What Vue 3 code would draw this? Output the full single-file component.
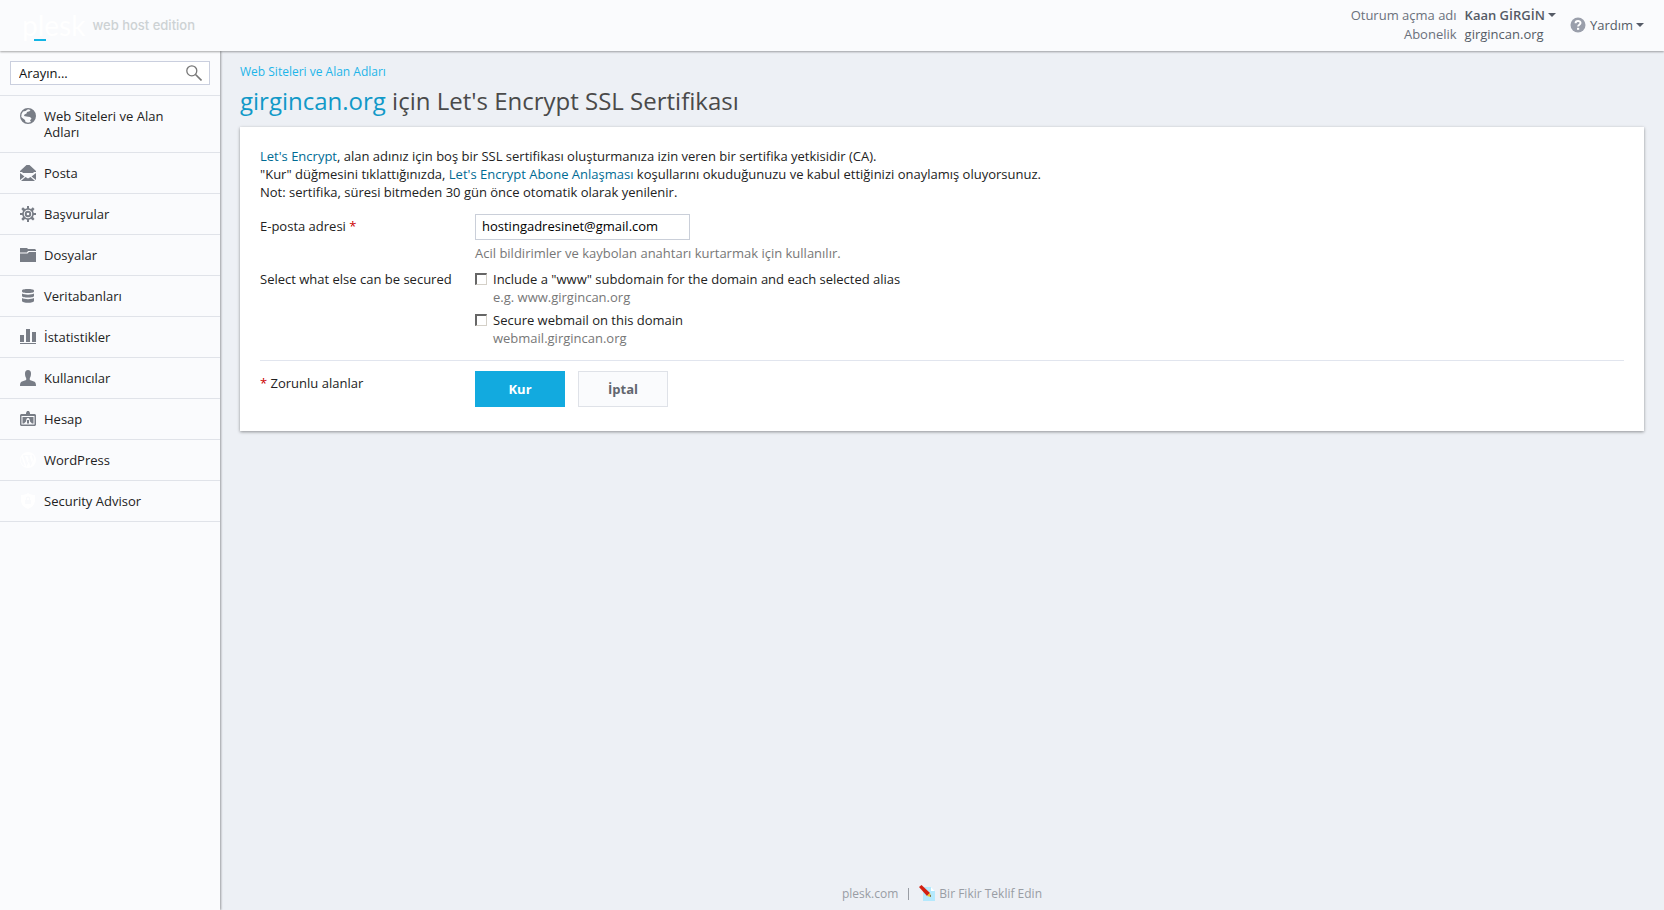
<template>
  <div class="page">
    <header class="header">
      <a class="logo" href="#">
        <span class="logo__name">plesk</span>
        <span class="logo__edition">web host edition</span>
      </a>
      <div class="account">
        <div class="account__grid">
          <span class="account__label">Oturum açma adı</span>
          <button class="account__button account__button--bold" type="button">
            Kaan GİRGİN<span class="caret"></span>
          </button>
          <span class="account__label">Abonelik</span>
          <span>girgincan.org</span>
        </div>
        <button class="account__button" type="button">
          <svg class="account__help" viewBox="0 0 16 16" aria-hidden="true">
            <circle cx="8" cy="8" r="7.5" fill="#9a9fab" />
            <path d="M5.6 6.2C5.6 3.2 10.5 3.2 10.5 6.1C10.5 7.8 8.1 7.8 8.1 9.6" fill="none" stroke="#fff" stroke-width="2" />
            <rect x="7" y="10.8" width="2.2" height="2" fill="#fff" />
          </svg>
          Yardım<span class="caret"></span>
        </button>
      </div>
    </header>

    <div class="body">
      <aside class="sidebar">
        <form class="search" @submit.prevent>
          <input v-model="search" class="search__input" type="text" placeholder="Arayın..." aria-label="Arayın" />
          <button class="search__button" type="submit" aria-label="Ara">
            <svg viewBox="0 0 16 16" fill="none" stroke="#777">
              <circle cx="5.8" cy="5.8" r="5" stroke-width="1.3" />
              <path d="M9.5 9.5L15.5 15.5" stroke-width="1.6" />
            </svg>
          </button>
        </form>
        <nav>
          <ul class="menu">
            <li v-for="item in menu" :key="item.label" class="menu__item">
              <a class="menu__link" href="#">
                <svg class="menu__icon" :class="{ 'menu__icon--pale': item.pale }" viewBox="0 0 16 16" aria-hidden="true">
                  <path :d="item.icon" fill="currentColor" fill-rule="evenodd" />
                </svg>
                <span>{{ item.label }}</span>
              </a>
            </li>
          </ul>
        </nav>
      </aside>

      <div class="content">
        <main class="main">
          <a class="breadcrumb" href="#">Web Siteleri ve Alan Adları</a>
          <h1 class="title"><a href="#">girgincan.org</a> için Let's Encrypt SSL Sertifikası</h1>

          <form class="panel" @submit.prevent>
            <p class="panel__intro">
              <a href="#">Let's Encrypt</a>, alan adınız için boş bir SSL sertifikası oluşturmanıza izin veren bir sertifika yetkisidir (CA).<br />
              "Kur" düğmesini tıklattığınızda, <a href="#">Let's Encrypt Abone Anlaşması</a> koşullarını okuduğunuzu ve kabul ettiğinizi onaylamış oluyorsunuz.<br />
              Not: sertifika, süresi bitmeden 30 gün önce otomatik olarak yenilenir.
            </p>

            <div class="row">
              <label class="row__label row__label--input" for="email">E-posta adresi <span class="required">*</span></label>
              <div>
                <input id="email" v-model="email" class="text-input" type="text" />
                <div class="hint hint--input">Acil bildirimler ve kaybolan anahtarı kurtarmak için kullanılır.</div>
              </div>
            </div>

            <div class="row row--options">
              <div id="secure-label" class="row__label">Select what else can be secured</div>
              <div class="options" role="group" aria-labelledby="secure-label">
                <div v-for="option in options" :key="option.id" class="option">
                  <input :id="option.id" v-model="option.checked" class="option__box" type="checkbox" />
                  <div>
                    <label :for="option.id">{{ option.label }}</label>
                    <div class="hint">{{ option.hint }}</div>
                  </div>
                </div>
              </div>
            </div>

            <div class="row row--footer">
              <div class="row__label row__label--footer"><span class="required">*</span> Zorunlu alanlar</div>
              <div class="buttons">
                <button class="button button--primary" type="submit">Kur</button>
                <button class="button" type="button">İptal</button>
              </div>
            </div>
          </form>
        </main>

        <footer class="footer">
          <a href="#">plesk.com</a>
          <span class="footer__separator"></span>
          <a class="footer__idea" href="#">
            <svg viewBox="0 0 16 16" aria-hidden="true">
              <path d="M4 2H12L16 6V16H4Z" fill="#b4e9fd" />
              <path d="M12 2V6H16Z" fill="#fff" />
              <path d="M0 2L2.5 0L11 8L8 11Z" fill="#d42010" />
              <path d="M8 11L11 8L12 12Z" fill="#f5c020" />
              <path d="M11 11L11.8 9.8L12 12Z" fill="#333" />
            </svg>
            Bir Fikir Teklif Edin
          </a>
        </footer>
      </div>
    </div>
  </div>
</template>

<script setup>
import { ref } from 'vue'

const search = ref('')
const email = ref('hostingadresinet@gmail.com')

const options = ref([
  {
    id: 'include-www',
    label: 'Include a "www" subdomain for the domain and each selected alias',
    hint: 'e.g. www.girgincan.org',
    checked: false,
  },
  {
    id: 'secure-webmail',
    label: 'Secure webmail on this domain',
    hint: 'webmail.girgincan.org',
    checked: false,
  },
])

// icon paths are drawn on a 16x16 grid
const menu = [
  {
    label: 'Web Siteleri ve Alan Adları',
    icon: 'M8 0A8 8 0 1 0 8 16A8 8 0 1 0 8 0ZM8 1.3L10.5 2L9.5 3.2L7 4L6.5 5.5L4.5 6.5L4 8L6.5 8.5L10 9L11.5 10.5L10 12.5L11 14L8 14.8L5.5 14L5 12L3 10.5L1.3 9A7 7 0 0 1 3 3.5L5.5 3Z',
  },
  {
    label: 'Posta',
    icon: 'M0 6L6.5 0H9.5L16 6V7H0ZM0 8L4.5 11.5L0 15ZM16 8L11.5 11.5L16 15ZM1 16L5.5 12L8 13.5L10.5 12L15 16ZM2 7L3 8H13L14 7Z',
  },
  {
    label: 'Başvurular',
    icon: 'M7 0H9V2.2L11 3L12.8 1.3L14.5 3L13 5L13.8 7H16V9H13.8L13 11L14.5 13L13 14.5L11 13L9 13.8V16H7V13.8L5 13L3 14.7L1.3 13L3 11L2.2 9H0V7H2.2L3 5L1.3 3L3 1.3L5 3L7 2.2ZM8 3.8A4.2 4.2 0 1 0 8 12.2A4.2 4.2 0 1 0 8 3.8ZM8 4.8A3.2 3.2 0 1 1 8 11.2A3.2 3.2 0 1 1 8 4.8ZM8 6.7A1.3 1.3 0 1 0 8 9.3A1.3 1.3 0 1 0 8 6.7Z',
  },
  {
    label: 'Dosyalar',
    icon: 'M0 1H7L8 2H15L16 3V4H8L7 5.5H0ZM0 6.5H7.5L9 5H16V15H0Z',
  },
  {
    label: 'Veritabanları',
    icon: 'M2 2.5C2 .5 14 .5 14 2.5V3.5C14 5.5 2 5.5 2 3.5ZM2 5.5C4 7 12 7 14 5.5V8C14 10 2 10 2 8ZM2 10C4 11.5 12 11.5 14 10V12.8C14 15.5 2 15.5 2 12.8Z',
  },
  {
    label: 'İstatistikler',
    icon: 'M0 6H4V13H0ZM6 0H10V13H6ZM12 3H16V13H12ZM0 14H16V15H0Z',
  },
  {
    label: 'Kullanıcılar',
    icon: 'M8 0C10 0 11 1.5 11 3.5C11 6 10.5 7 9.8 8V10L14 11.5C15.5 12 16 13.5 16 16H0C0 13.5 .5 12 2 11.5L6.2 10V8C5.5 7 5 6 5 3.5C5 1.5 6 0 8 0Z',
  },
  {
    label: 'Hesap',
    icon: 'M6 2L7 0H9L10 2V3H15L16 4V14L15 15H1L0 14V4L1 3H6ZM1.5 5V13.5H14.5V5ZM2.5 6H13.5V12.5H12L10 10.5L9.5 8L8.5 7H7.5L6.5 8L6 10.5L4 12.5H2.5ZM7 9H9V12.5H7Z',
  },
  {
    label: 'WordPress',
    icon: 'M8 0A8 8 0 1 0 8 16A8 8 0 1 0 8 0ZM1.5 5L5 14.5A7 7 0 0 1 1.5 5ZM3 3H6V4H5L7.5 11L8.7 7.7L7.3 4H6V3H10.5V4H9.5L12 11L13 7.5L11.5 3.5L13 3L14 5V7L10.5 14.5L8.7 9.5L6.5 15L3 4Z',
    pale: true,
  },
  {
    label: 'Security Advisor',
    icon: 'M8 0C10 1.5 12.5 2 15 2V7C15 11.5 12 14.5 8 16C4 14.5 1 11.5 1 7V2C3.5 2 6 1.5 8 0ZM8 3.5C6 3.5 5.8 5 5.8 7H5V11H11V7H10.2C10.2 5 10 3.5 8 3.5ZM8 4.5C9 4.5 9.2 5.5 9.2 7H6.8C6.8 5.5 7 4.5 8 4.5Z',
    pale: true,
  },
]
</script>

<style>
body {
  margin: 0;
  background: #edf0f5;
}
</style>

<style scoped>
.page {
  display: flex;
  flex-direction: column;
  min-height: 100vh;
  font-family: "Open Sans", "Noto Sans", sans-serif;
  font-size: 13px;
  line-height: 18px;
  color: #222;
}

.page *,
.page {
  box-sizing: border-box;
}

a {
  text-decoration: none;
}

button,
input {
  font: inherit;
}

/* Header */
.header {
  position: relative;
  z-index: 1;
  display: flex;
  justify-content: space-between;
  height: 51px;
  padding: 0 20px 2px 22px;
  background: #fafbfd;
  box-shadow: 0 1px 2px rgba(0, 0, 0, 0.35);
}

.logo {
  display: flex;
  align-items: center;
  gap: 7px;
}

.logo__name {
  position: relative;
  font-family: Lato, sans-serif;
  font-size: 28px;
  line-height: 28px;
  color: #fff;
}

.logo__name::after {
  content: "";
  position: absolute;
  left: 12px;
  bottom: -2px;
  width: 12px;
  height: 2px;
  background: #12b5e5;
}

.logo__edition {
  font-family: Inter, sans-serif;
  font-weight: 500;
  color: #cdd2d4;
}

.account {
  display: flex;
  align-items: center;
  gap: 14px;
  color: #555b66;
}

.account__grid {
  display: grid;
  grid-template-columns: auto auto;
  column-gap: 8px;
  row-gap: 1px;
}

.account__label {
  text-align: right;
  color: #6b717c;
}

.account__button {
  display: flex;
  align-items: center;
  padding: 0;
  border: 0;
  background: none;
  color: #555b66;
  cursor: pointer;
}

.account__button--bold {
  font-weight: 600;
}

.account__help {
  width: 16px;
  height: 16px;
  margin-right: 4px;
}

.caret {
  margin-left: 3px;
  border: 4px solid transparent;
  border-top-color: currentColor;
  border-bottom: 0;
}

/* Sidebar */
.body {
  display: flex;
  flex: 1;
}

.sidebar {
  width: 220px;
  flex: none;
  background: #fafbfd;
  box-shadow: 1px 0 2px rgba(0, 0, 0, 0.35);
}

.search {
  display: flex;
  height: 24px;
  margin: 10px 10px 10px;
  border: 1px solid #cacfde;
  background: #fff;
}

.search__input {
  flex: 1;
  min-width: 0;
  padding: 0 8px;
  border: 0;
  outline: 0;
  background: none;
}

.search__input::placeholder {
  color: #111;
  opacity: 1;
}

.search__button {
  display: flex;
  align-items: center;
  padding: 0 7px;
  border: 0;
  background: none;
  cursor: pointer;
}

.search__button svg {
  width: 16px;
  height: 16px;
}

.menu {
  margin: 0;
  padding: 0;
  list-style: none;
  border-top: 1px solid #e0e3e9;
}

.menu__item {
  border-bottom: 1px solid #e0e3e9;
}

.menu__link {
  display: flex;
  gap: 8px;
  padding: 12px 20px;
  line-height: 16px;
  color: #222;
}

.menu__icon {
  flex: none;
  width: 16px;
  height: 16px;
  color: #787d86;
}

.menu__icon--pale {
  color: #fff;
}

/* Content */
.content {
  display: flex;
  flex: 1;
  flex-direction: column;
  justify-content: space-between;
  padding: 12px 20px 7px;
}

.breadcrumb {
  display: block;
  font-size: 12px;
  color: #1eb5e9;
}

.title {
  margin: 4px 0 10px;
  font-size: 24px;
  font-weight: 400;
  line-height: 32px;
  color: #4a4a4a;
}

.title a {
  color: #1199c8;
}

.panel {
  padding: 20px 20px 24px;
  background: #fff;
  box-shadow: 0 1px 3px rgba(0, 0, 0, 0.4);
}

.panel__intro {
  margin: 0 0 13px;
}

.panel__intro a {
  color: #006b94;
}

.row {
  display: grid;
  grid-template-columns: 215px 1fr;
}

.row__label--input {
  padding-top: 3px;
}

.required {
  color: #c00;
}

.text-input {
  display: block;
  width: 215px;
  height: 26px;
  padding: 0 6px 2px;
  border: 1px solid #cacfd9;
  background: #fff;
  color: #000;
}

.hint {
  color: #777;
}

.hint--input {
  margin-top: 4px;
}

.row--options {
  padding: 8px 0 13px;
}

.options {
  display: grid;
  gap: 5px;
}

.option {
  display: flex;
  gap: 6px;
}

.option__box {
  appearance: none;
  flex: none;
  width: 12px;
  height: 12px;
  margin: 3px 0 0;
  border: 2px solid;
  border-color: #666 #d4d0c8 #d4d0c8 #666;
  border-right-width: 1px;
  border-bottom-width: 1px;
  background: #fff;
}

.option__box:checked {
  background: #12aadf;
}

.row--footer {
  padding-top: 10px;
  border-top: 1px solid #e1e5ee;
}

.row__label--footer {
  padding-top: 3px;
}

.buttons {
  display: flex;
  gap: 13px;
}

.button {
  width: 90px;
  height: 36px;
  padding: 0;
  border: 1px solid #dfe2e8;
  background: #fafbfd;
  font-weight: 700;
  color: #62666e;
  cursor: pointer;
}

.button--primary {
  border-color: #12aadf;
  background: #12aadf;
  color: #fff;
}

/* Footer */
.footer {
  display: flex;
  align-items: center;
  justify-content: center;
  gap: 10px;
  font-size: 12px;
}

.footer a {
  color: #999da4;
}

.footer__separator {
  width: 1px;
  height: 12px;
  background: #999da4;
}

.footer__idea {
  display: flex;
  gap: 4px;
}

.footer__idea svg {
  width: 16px;
  height: 16px;
}
</style>
